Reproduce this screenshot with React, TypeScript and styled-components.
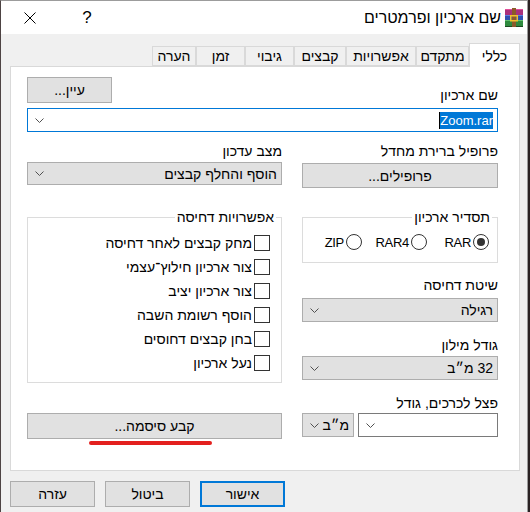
import React from 'react';
import styled, { createGlobalStyle } from 'styled-components';

const GlobalStyle = createGlobalStyle`
  html, body {
    margin: 0;
    padding: 0;
    background: #2a2223;
  }
  body {
    font-family: "Liberation Sans", "DejaVu Sans", sans-serif;
  }
`;

const Window = styled.div`
  width: 528px;
  height: 512px;
  box-sizing: border-box;
  background: #f0f0f0;
  border-left: 1px solid #4d4343;
  border-top: 1px solid #9c9c9c;
  border-right: 1px solid #9c9c9c;
  direction: rtl;
  font-size: 14px;
  color: #000;
  overflow: hidden;
  display: flex;
  flex-direction: column;
`;

const TitleBar = styled.div`
  height: 33px;
  flex: none;
  background: #fff;
  display: flex;
  align-items: center;
  padding-right: 4px;
`;

const TitleText = styled.div`
  font-size: 16px;
  margin-right: 4px;
`;

const Captions = styled.div`
  margin-right: auto;
  display: flex;
  direction: ltr;
  gap: 11px;
  padding-left: 6px;
`;

const CaptionButton = styled.div`
  width: 46px;
  height: 33px;
  display: flex;
  align-items: center;
  justify-content: center;
  font-size: 17px;
`;

const Body = styled.div`
  flex: 1;
  display: flex;
  flex-direction: column;
  padding: 9px 7px 0 9px;
`;

const TabBar = styled.div`
  display: flex;
  align-items: flex-end;
  height: 23px;
`;

const Tab = styled.div<{ $active?: boolean; $w: number }>`
  width: ${p => p.$w}px;
  height: ${p => (p.$active ? 24 : 20)}px;
  margin-bottom: ${p => (p.$active ? -1 : 0)}px;
  box-sizing: border-box;
  border: 1px solid #d9d9d9;
  border-bottom: ${p => (p.$active ? 'none' : '1px solid #d9d9d9')};
  background: ${p => (p.$active ? '#fff' : '#f0f0f0')};
  position: relative;
  z-index: ${p => (p.$active ? 2 : 1)};
  display: flex;
  align-items: center;
  justify-content: center;
  font-size: 14px;
`;

const Panel = styled.div`
  width: 510px;
  height: 405px;
  box-sizing: border-box;
  background: #fff;
  border: 1px solid #d9d9d9;
  padding: 10px 21px 0 16px;
  display: flex;
  flex-direction: column;
`;

const NameRow = styled.div`
  display: flex;
  align-items: flex-end;
  justify-content: space-between;
`;

const Label = styled.div`
  line-height: 16px;
  height: 16px;
  white-space: nowrap;
`;

const Button = styled.div<{ $w?: number; $h?: number; $default?: boolean }>`
  width: ${p => (p.$w ? `${p.$w}px` : 'auto')};
  height: ${p => p.$h ?? 25}px;
  box-sizing: border-box;
  background: #e1e1e1;
  border: ${p => (p.$default ? '2px solid #0078d7' : '1px solid #adadad')};
  display: flex;
  align-items: center;
  justify-content: center;
  white-space: nowrap;
`;

const Combo = styled.div<{ $white?: boolean; $focused?: boolean; $h?: number }>`
  height: ${p => p.$h ?? 24}px;
  box-sizing: border-box;
  background: ${p => (p.$white ? '#fff' : '#e1e1e1')};
  border: 1px solid ${p => (p.$focused ? '#0078d7' : p.$white ? '#7a7a7a' : '#adadad')};
  display: flex;
  align-items: center;
  justify-content: space-between;
  padding: 0 4px 0 7px;
  white-space: nowrap;
`;

const Selected = styled.span`
  background: #0078d7;
  color: #fff;
  padding: 1px 0;
  font-size: 13px;
  border-left: 1px solid #000;
`;

const Columns = styled.div`
  display: grid;
  grid-template-columns: 196px 255px;
  column-gap: 20px;
  margin-top: 11px;
`;

const Column = styled.div`
  display: flex;
  flex-direction: column;
`;

const Gap = styled.div<{ $h: number }>`
  height: ${p => p.$h}px;
  flex: none;
`;

const Group = styled.fieldset<{ $h: number }>`
  margin: 0;
  height: ${p => p.$h}px;
  box-sizing: border-box;
  border: 1px solid #dcdcdc;
  padding: 0;
  min-width: 0;
`;

const Legend = styled.legend`
  padding: 0 2px;
  margin-right: 5px;
  line-height: 16px;
`;

const RadioRow = styled.div`
  display: flex;
  padding: 9px 8px 0 0;
`;

const Option = styled.div<{ $w?: number; $gap?: number }>`
  display: flex;
  align-items: center;
  gap: 2px;
  height: 16px;
  width: ${p => (p.$w ? `${p.$w}px` : 'auto')};
  margin-left: ${p => p.$gap ?? 0}px;
`;

const FormatName = styled.span`
  font-size: 13px;
  letter-spacing: -0.3px;
`;

const RadioCircle = styled.div<{ $checked?: boolean }>`
  width: 16px;
  height: 16px;
  flex: none;
  box-sizing: border-box;
  border-radius: 50%;
  border: 1px solid #333;
  background: #fff;
  display: flex;
  align-items: center;
  justify-content: center;
  &::after {
    content: '';
    width: 8px;
    height: 8px;
    border-radius: 50%;
    background: ${p => (p.$checked ? '#333' : 'transparent')};
  }
`;

const CheckList = styled.div`
  display: flex;
  flex-direction: column;
  gap: 8px;
  padding: 10px 11px 0 0;
`;

const CheckBox = styled.div`
  width: 16px;
  height: 16px;
  box-sizing: border-box;
  border: 1px solid #333;
  background: #fff;
  flex: none;
`;

const VolumeRow = styled.div`
  display: flex;
  gap: 4px;
`;

const RedMark = styled.div`
  align-self: flex-end;
  margin-left: 62px;
  width: 123px;
  height: 4px;
  border-radius: 2px;
  background: #e3201e;
`;

const Footer = styled.div`
  display: flex;
  justify-content: flex-end;
  gap: 10px;
  margin-top: 10px;
`;

const Chevron = () => (
  <svg width="9" height="5" viewBox="0 0 9 5">
    <path d="M0.5 0.5 L4.5 4.5 L8.5 0.5" fill="none" stroke="#505050" strokeWidth="1" />
  </svg>
);

const CloseIcon = () => (
  <svg width="12" height="12" viewBox="0 0 12 12">
    <path d="M0.5 0.5 L11.5 11.5 M11.5 0.5 L0.5 11.5" stroke="#000" strokeWidth="1" />
  </svg>
);

const RarIcon = () => (
  <svg width="18" height="19" viewBox="0 0 18 19">
    <rect x="0" y="1" width="18" height="6" fill="#a8307c" />
    <rect x="0" y="1" width="18" height="1" fill="#e0509a" />
    <rect x="0" y="7" width="18" height="5" fill="#2f4fb0" />
    <rect x="0" y="7" width="18" height="1" fill="#5c7de0" />
    <rect x="0" y="12" width="18" height="6" fill="#2e8a3e" />
    <rect x="0" y="12" width="18" height="1" fill="#62c070" />
    <rect x="0" y="18" width="18" height="1" fill="#1c4a22" />
    <rect x="7" y="0" width="4" height="19" fill="#8b5a2b" />
    <rect x="5.75" y="7.75" width="6.5" height="5" fill="none" stroke="#f2c12e" strokeWidth="1.5" />
  </svg>
);

const tabs = [
  { label: 'כללי', w: 51, active: true },
  { label: 'מתקדם', w: 53 },
  { label: 'אפשרויות', w: 70 },
  { label: 'קבצים', w: 52 },
  { label: 'גיבוי', w: 49 },
  { label: 'זמן', w: 49 },
  { label: 'הערה', w: 44 },
];

const checks = [
  'מחק קבצים לאחר דחיסה',
  'צור ארכיון חילוץ־עצמי',
  'צור ארכיון יציב',
  'הוסף רשומת השבה',
  'בחן קבצים דחוסים',
  'נעל ארכיון',
];

const formats = [
  { label: 'RAR', checked: true, w: 43, gap: 19 },
  { label: 'RAR4', w: 50, gap: 15 },
  { label: 'ZIP', w: 36, gap: 0 },
];

export default function App() {
  return (
    <>
      <GlobalStyle />
      <Window>
        <TitleBar>
          <RarIcon />
          <TitleText>שם ארכיון ופרמטרים</TitleText>
          <Captions>
            <CaptionButton><CloseIcon /></CaptionButton>
            <CaptionButton>?</CaptionButton>
          </Captions>
        </TitleBar>
        <Body>
          <TabBar>
            {tabs.map(t => (
              <Tab key={t.label} $active={t.active} $w={t.w}>{t.label}</Tab>
            ))}
          </TabBar>
          <Panel>
            <NameRow>
              <Label>שם ארכיון</Label>
              <Button $w={85} $h={26}>עיין...</Button>
            </NameRow>
            <Gap $h={5} />
            <Combo $white $focused $h={24}>
              <Selected>Zoom.rar</Selected>
              <Chevron />
            </Combo>
            <Columns>
              <Column>
                <Label>פרופיל ברירת מחדל</Label>
                <Gap $h={4} />
                <Button $h={25}>פרופילים...</Button>
                <Gap $h={21} />
                <Group $h={54}>
                  <Legend>תסדיר ארכיון</Legend>
                  <RadioRow>
                    {formats.map(f => (
                      <Option key={f.label} $w={f.w} $gap={f.gap}>
                        <RadioCircle $checked={f.checked} />
                        <FormatName>{f.label}</FormatName>
                      </Option>
                    ))}
                  </RadioRow>
                </Group>
                <Gap $h={14} />
                <Label>שיטת דחיסה</Label>
                <Gap $h={5} />
                <Combo $h={24}>
                  <span>רגילה</span>
                  <Chevron />
                </Combo>
                <Gap $h={15} />
                <Label>גודל מילון</Label>
                <Gap $h={3} />
                <Combo $h={24}>
                  <span>32 מ״ב</span>
                  <Chevron />
                </Combo>
                <Gap $h={15} />
                <Label>פצל לכרכים, גודל</Label>
                <Gap $h={2} />
                <VolumeRow>
                  <Combo $white $h={24} style={{ flex: 1 }}>
                    <span />
                    <Chevron />
                  </Combo>
                  <Combo $h={24} style={{ width: 52 }}>
                    <span>מ״ב</span>
                    <Chevron />
                  </Combo>
                </VolumeRow>
              </Column>
              <Column>
                <Label>מצב עדכון</Label>
                <Gap $h={3} />
                <Combo $h={23}>
                  <span>הוסף והחלף קבצים</span>
                  <Chevron />
                </Combo>
                <Gap $h={24} />
                <Group $h={174}>
                  <Legend>אפשרויות דחיסה</Legend>
                  <CheckList>
                    {checks.map(c => (
                      <Option key={c}>
                        <CheckBox />
                        <span>{c}</span>
                      </Option>
                    ))}
                  </CheckList>
                </Group>
                <Gap $h={30} />
                <Button $h={26}>קבע סיסמה...</Button>
                <Gap $h={2} />
                <RedMark />
              </Column>
            </Columns>
          </Panel>
          <Footer>
            <Button $w={85} $h={26} $default>אישור</Button>
            <Button $w={85} $h={26}>ביטול</Button>
            <Button $w={85} $h={26}>עזרה</Button>
          </Footer>
        </Body>
      </Window>
    </>
  );
}
